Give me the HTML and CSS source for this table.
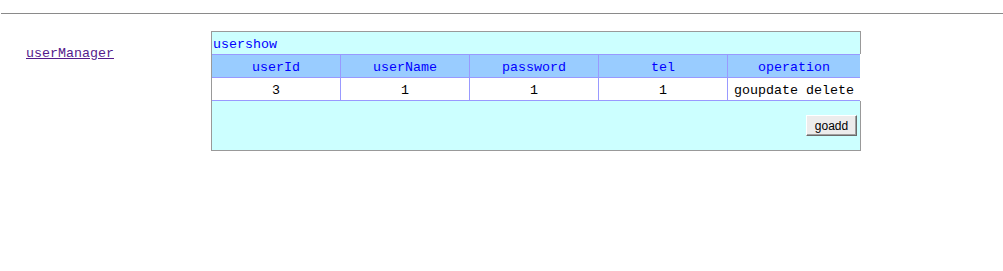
FILE: index.html
```html
<!DOCTYPE html>
<html>
<head>
<meta charset="utf-8">
<title>userManager</title>
<link rel="stylesheet" href="styles.css">
</head>
<body>
<div class="rule"></div>
<div class="page">
  <div class="sidebar">
    <a class="nav-link" href="#">userManager</a>
  </div>
  <div class="box">
    <div class="title">usershow</div>
    <div class="grid">
      <div class="cell head">userId</div>
      <div class="cell head">userName</div>
      <div class="cell head">password</div>
      <div class="cell head">tel</div>
      <div class="cell head">operation</div>
      <div class="cell data">3</div>
      <div class="cell data">1</div>
      <div class="cell data">1</div>
      <div class="cell data">1</div>
      <div class="cell data">goupdate delete</div>
    </div>
    <div class="footer">
      <button class="btn" type="button">goadd</button>
    </div>
  </div>
</div>
</body>
</html>
```
FILE: styles.css
```css
html, body {
  margin: 0;
  padding: 0;
  background: #ffffff;
}

body {
  font-family: "Liberation Mono", "DejaVu Sans Mono", monospace;
  font-size: 13.33px;
}

.rule {
  margin: 13px 0 0 1px;
  height: 0;
  border-top: 1px solid #8a8a8a;
}

.page {
  display: flex;
  margin-top: 17px;
}

.sidebar {
  width: 211px;
  box-sizing: border-box;
  padding: 15px 0 0 26px;
  line-height: 16px;
}

.nav-link {
  color: #551a8b;
  text-decoration: underline;
}

.box {
  width: 650px;
  box-sizing: border-box;
  border-left: 1px solid #999999;
  border-top: 1px solid #999999;
  border-bottom: 1px solid #999999;
}

.title {
  height: 22px;
  box-sizing: border-box;
  padding: 4px 0 0 1px;
  line-height: 18px;
  background: #ccffff;
  color: #0000ff;
  border-right: 1px solid #999999;
}

.grid {
  display: grid;
  width: 648px;
  grid-template-columns: 128px 128px 128px 128px 132px;
  grid-auto-rows: 22px;
  gap: 1px;
  background: #9999ff;
  border-top: 1px solid #9999ff;
  border-bottom: 1px solid #9999ff;
}

.cell {
  box-sizing: border-box;
  padding-top: 4px;
  line-height: 18px;
  text-align: center;
  white-space: nowrap;
}

.head {
  background: #99ccff;
  color: #0000ff;
}

.data {
  background: #ffffff;
  color: #000000;
}

.footer {
  height: 49px;
  box-sizing: border-box;
  background: #ccffff;
  border-right: 1px solid #999999;
  display: flex;
  justify-content: flex-end;
  align-items: center;
  padding-right: 3px;
}

.btn {
  width: 51px;
  height: 21px;
  padding: 0;
  margin: 0;
  font-family: "Liberation Sans", Arial, sans-serif;
  font-size: 12px;
  color: #000000;
  background: #ececec;
  border: 1px solid;
  border-color: #ffffff #6a6a6a #6a6a6a #ffffff;
  box-shadow: inset -1px -1px 0 #a0a0a0;
  border-radius: 0;
}
```
